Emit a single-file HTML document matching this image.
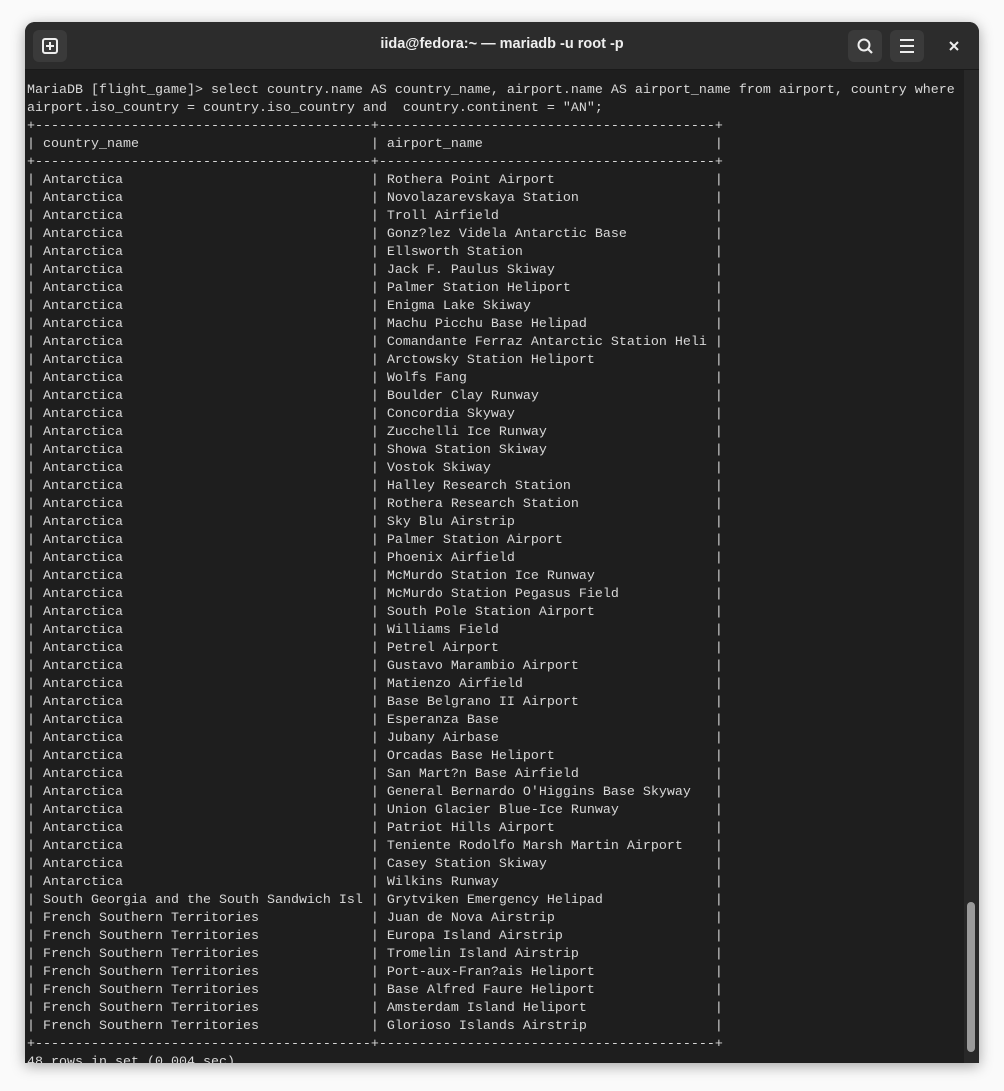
<!DOCTYPE html>
<html><head><meta charset="utf-8"><style>
html,body{margin:0;padding:0;background:#fafafa;width:1004px;height:1091px;overflow:hidden}
.win{position:absolute;left:25px;top:22px;width:954px;height:1041px;background:#1e1e1e;border-radius:10px 10px 0 0;overflow:hidden;box-shadow:0 3px 14px rgba(0,0,0,.35)}
.hdr{position:absolute;left:0;top:0;width:954px;height:47px;background:#2c2c2c;border-bottom:1px solid #1a1a1a}
.title{position:absolute;left:0;right:0;top:14px;text-align:center;color:#eee;font:bold 14.5px "Liberation Sans",sans-serif}
.btn{position:absolute;top:8px;width:34px;height:32px;border-radius:6px;background:#3a3a3a}
.term{position:absolute;left:2px;top:60px;margin:0;color:#d8d8d8;font:13.33px/18px "Liberation Mono",monospace;white-space:pre}
.sb{position:absolute;left:939px;top:48px;width:15px;height:993px;background:#282828}
.th{position:absolute;left:942px;top:880px;width:8px;height:150px;border-radius:4px;background:#9a9a9a}
</style></head><body>
<div class="win">
<div class="hdr">
<div class="btn" style="left:8px"><svg width="34" height="32" viewBox="0 0 34 32"><rect x="10" y="9" width="14" height="14" rx="2" fill="none" stroke="#eee" stroke-width="2"/><path d="M17 12v8M13 16h8" stroke="#eee" stroke-width="2"/></svg></div>
<div class="title">iida@fedora:~ — mariadb -u root -p</div>
<div class="btn" style="left:823px"><svg width="34" height="32" viewBox="0 0 34 32"><circle cx="16" cy="15" r="5.5" fill="none" stroke="#eee" stroke-width="2"/><path d="M20 19l4 4" stroke="#eee" stroke-width="2.2"/></svg></div>
<div class="btn" style="left:865px"><svg width="34" height="32" viewBox="0 0 34 32"><path d="M10 10h14M10 16h14M10 22h14" stroke="#eee" stroke-width="2"/></svg></div>
<svg style="position:absolute;left:922px;top:17px" width="14" height="14" viewBox="0 0 14 14"><path d="M3 3l8 8M11 3l-8 8" stroke="#eee" stroke-width="2"/></svg>
</div>
<div class="sb"></div><div class="th"></div>
<pre class="term">MariaDB [flight_game]&gt; select country.name AS country_name, airport.name AS airport_name from airport, country where
airport.iso_country = country.iso_country and  country.continent = "AN";
+------------------------------------------+------------------------------------------+
| country_name                             | airport_name                             |
+------------------------------------------+------------------------------------------+
| Antarctica                               | Rothera Point Airport                    |
| Antarctica                               | Novolazarevskaya Station                 |
| Antarctica                               | Troll Airfield                           |
| Antarctica                               | Gonz?lez Videla Antarctic Base           |
| Antarctica                               | Ellsworth Station                        |
| Antarctica                               | Jack F. Paulus Skiway                    |
| Antarctica                               | Palmer Station Heliport                  |
| Antarctica                               | Enigma Lake Skiway                       |
| Antarctica                               | Machu Picchu Base Helipad                |
| Antarctica                               | Comandante Ferraz Antarctic Station Heli |
| Antarctica                               | Arctowsky Station Heliport               |
| Antarctica                               | Wolfs Fang                               |
| Antarctica                               | Boulder Clay Runway                      |
| Antarctica                               | Concordia Skyway                         |
| Antarctica                               | Zucchelli Ice Runway                     |
| Antarctica                               | Showa Station Skiway                     |
| Antarctica                               | Vostok Skiway                            |
| Antarctica                               | Halley Research Station                  |
| Antarctica                               | Rothera Research Station                 |
| Antarctica                               | Sky Blu Airstrip                         |
| Antarctica                               | Palmer Station Airport                   |
| Antarctica                               | Phoenix Airfield                         |
| Antarctica                               | McMurdo Station Ice Runway               |
| Antarctica                               | McMurdo Station Pegasus Field            |
| Antarctica                               | South Pole Station Airport               |
| Antarctica                               | Williams Field                           |
| Antarctica                               | Petrel Airport                           |
| Antarctica                               | Gustavo Marambio Airport                 |
| Antarctica                               | Matienzo Airfield                        |
| Antarctica                               | Base Belgrano II Airport                 |
| Antarctica                               | Esperanza Base                           |
| Antarctica                               | Jubany Airbase                           |
| Antarctica                               | Orcadas Base Heliport                    |
| Antarctica                               | San Mart?n Base Airfield                 |
| Antarctica                               | General Bernardo O'Higgins Base Skyway   |
| Antarctica                               | Union Glacier Blue-Ice Runway            |
| Antarctica                               | Patriot Hills Airport                    |
| Antarctica                               | Teniente Rodolfo Marsh Martin Airport    |
| Antarctica                               | Casey Station Skiway                     |
| Antarctica                               | Wilkins Runway                           |
| South Georgia and the South Sandwich Isl | Grytviken Emergency Helipad              |
| French Southern Territories              | Juan de Nova Airstrip                    |
| French Southern Territories              | Europa Island Airstrip                   |
| French Southern Territories              | Tromelin Island Airstrip                 |
| French Southern Territories              | Port-aux-Fran?ais Heliport               |
| French Southern Territories              | Base Alfred Faure Heliport               |
| French Southern Territories              | Amsterdam Island Heliport                |
| French Southern Territories              | Glorioso Islands Airstrip                |
+------------------------------------------+------------------------------------------+
48 rows in set (0.004 sec)</pre>
</div>
</body></html>
